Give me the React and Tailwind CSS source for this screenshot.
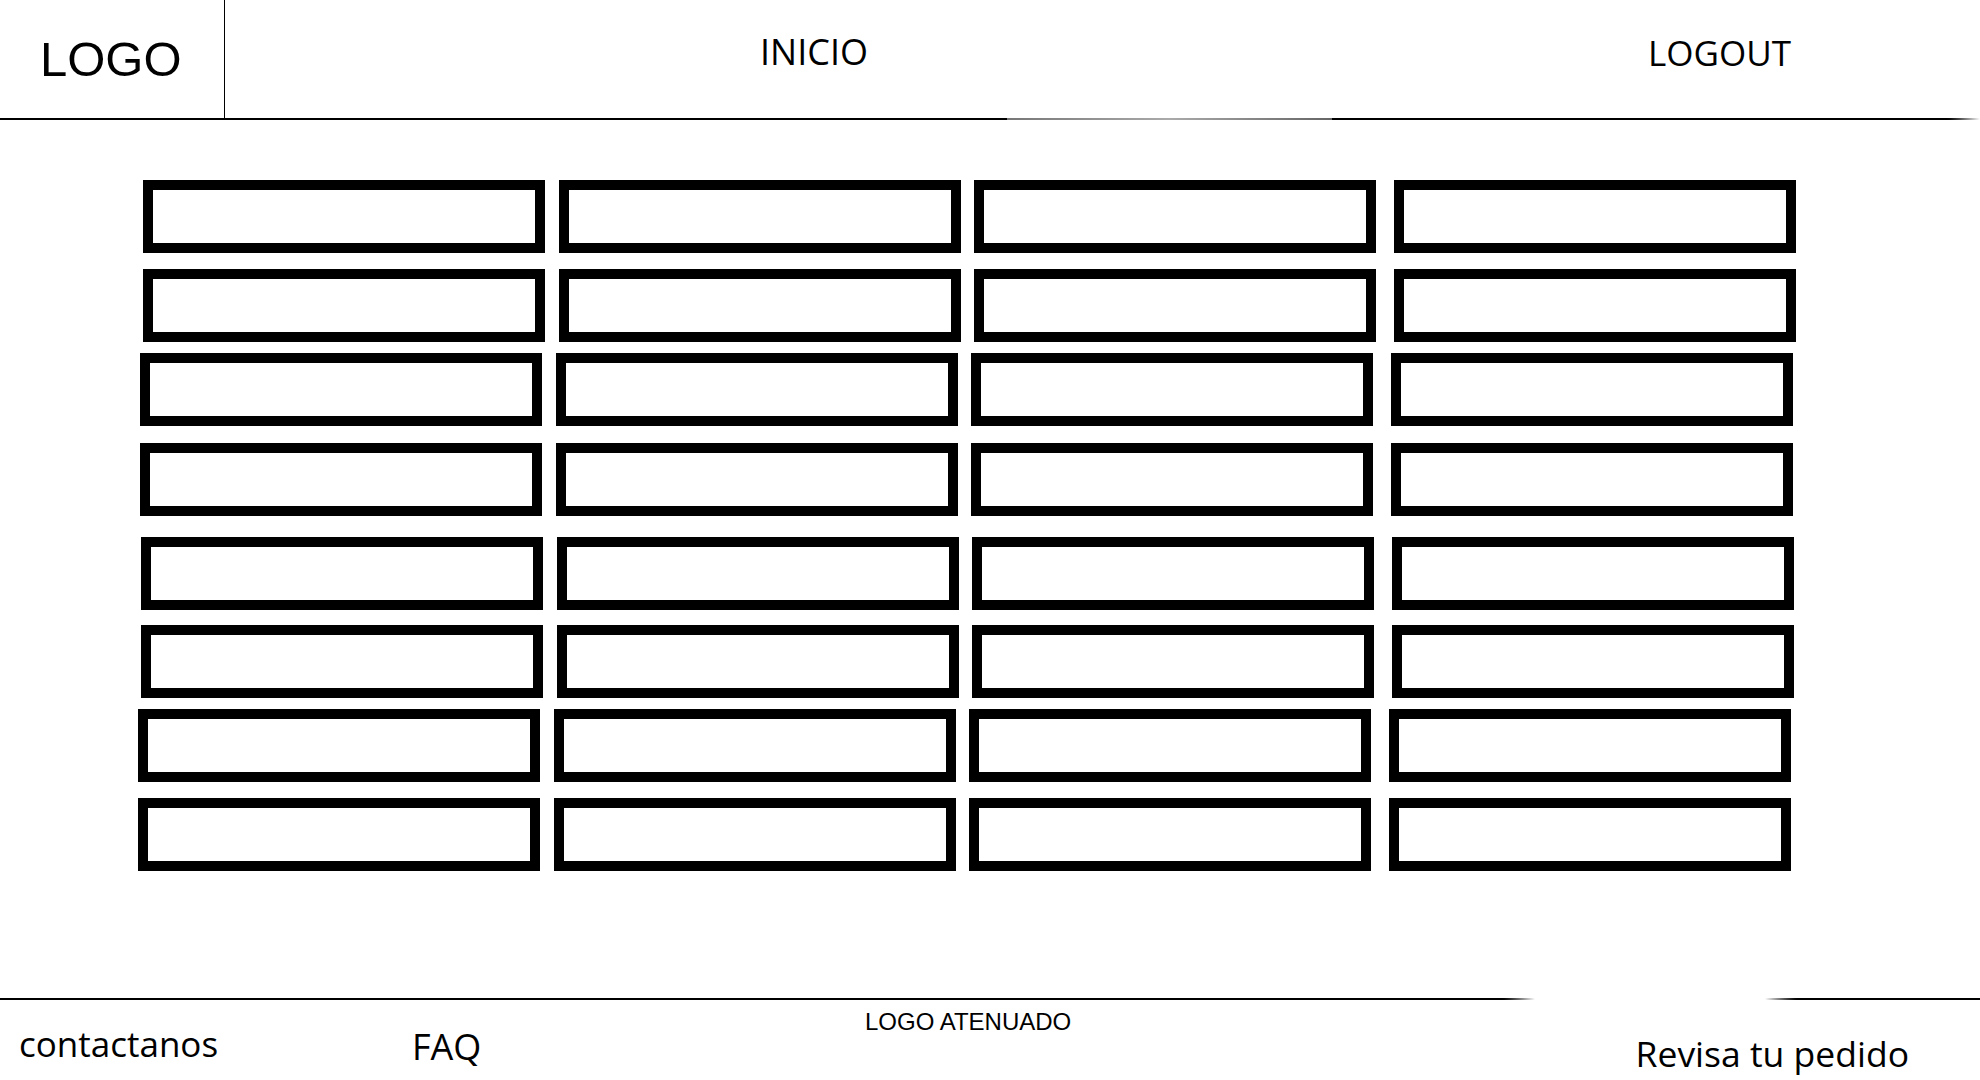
import React from "react";

const rows = [
  "mt-[60px] ml-[143px]",
  "mt-[16px] ml-[143px]",
  "mt-[11px] ml-[140px]",
  "mt-[17px] ml-[140px]",
  "mt-[21px] ml-[141px]",
  "mt-[15px] ml-[141px]",
  "mt-[11px] ml-[138px]",
  "mt-[16px] ml-[138px]",
];

const colGaps = ["", "ml-[14px]", "ml-[13px]", "ml-[18px]"];

function Box({ cls }) {
  return <div className={`h-[73px] w-[402px] shrink-0 border-[10px] border-black bg-white ${cls}`} />;
}

export default function App() {
  return (
    <div className="flex h-[1080px] w-[1980px] flex-col overflow-hidden bg-white text-black">
      {/* Header */}
      <header className="flex h-[120px] shrink-0 flex-col">
        <div className="flex h-[118px]">
          <div className="w-[225px] shrink-0 border-r border-black pl-[40px] pt-[35px]">
            <span className="block text-[49px] leading-none font-['Liberation_Sans',Arial,sans-serif]">LOGO</span>
          </div>
          <div className="flex flex-1 items-start">
            <span className="ml-[535px] mt-[34px] block text-[36px] leading-none font-['Open_Sans',sans-serif]">INICIO</span>
            <span className="ml-auto mr-[189px] mt-[35px] block text-[35px] leading-none font-['Open_Sans',sans-serif]">LOGOUT</span>
          </div>
        </div>
        <div className="flex h-[2px]">
          <div className="w-[1007px] bg-black" />
          <div className="w-[325px] bg-gradient-to-r from-[#777] via-[#aaa] to-[#666]" />
          <div className="w-[613px] bg-black" />
          <div className="w-[35px] bg-gradient-to-r from-black to-white" />
        </div>
      </header>

      {/* Main grid */}
      <main className="flex flex-1 flex-col">
        {rows.map((r, i) => (
          <div key={i} className={`flex ${r}`}>
            {colGaps.map((g, j) => (
              <Box key={j} cls={g} />
            ))}
          </div>
        ))}
      </main>

      {/* Footer */}
      <footer className="flex h-[82px] shrink-0 flex-col">
        <div className="flex h-[2px]">
          <div className="w-[1500px] bg-black" />
          <div className="w-[35px] bg-gradient-to-r from-black to-white" />
          <div className="w-[230px]" />
          <div className="w-[35px] bg-gradient-to-r from-white to-black" />
          <div className="flex-1 bg-black" />
        </div>
        <div className="flex flex-1 items-start">
          <div className="w-[412px] shrink-0 pl-[19px] pt-[26px]">
            <span className="block text-[35px] leading-none font-['Open_Sans',sans-serif]">contactanos</span>
          </div>
          <div className="w-[453px] shrink-0 pt-[29px]">
            <span className="block text-[36px] leading-none font-['Open_Sans',sans-serif]">FAQ</span>
          </div>
          <div className="shrink-0 pt-[10px]">
            <span className="block text-[24px] leading-none font-['Liberation_Sans',Arial,sans-serif]">LOGO ATENUADO</span>
          </div>
          <div className="ml-auto mr-[71px] pt-[36px]">
            <span className="block text-[35.5px] leading-none font-['Open_Sans',sans-serif]">Revisa tu pedido</span>
          </div>
        </div>
      </footer>
    </div>
  );
}
